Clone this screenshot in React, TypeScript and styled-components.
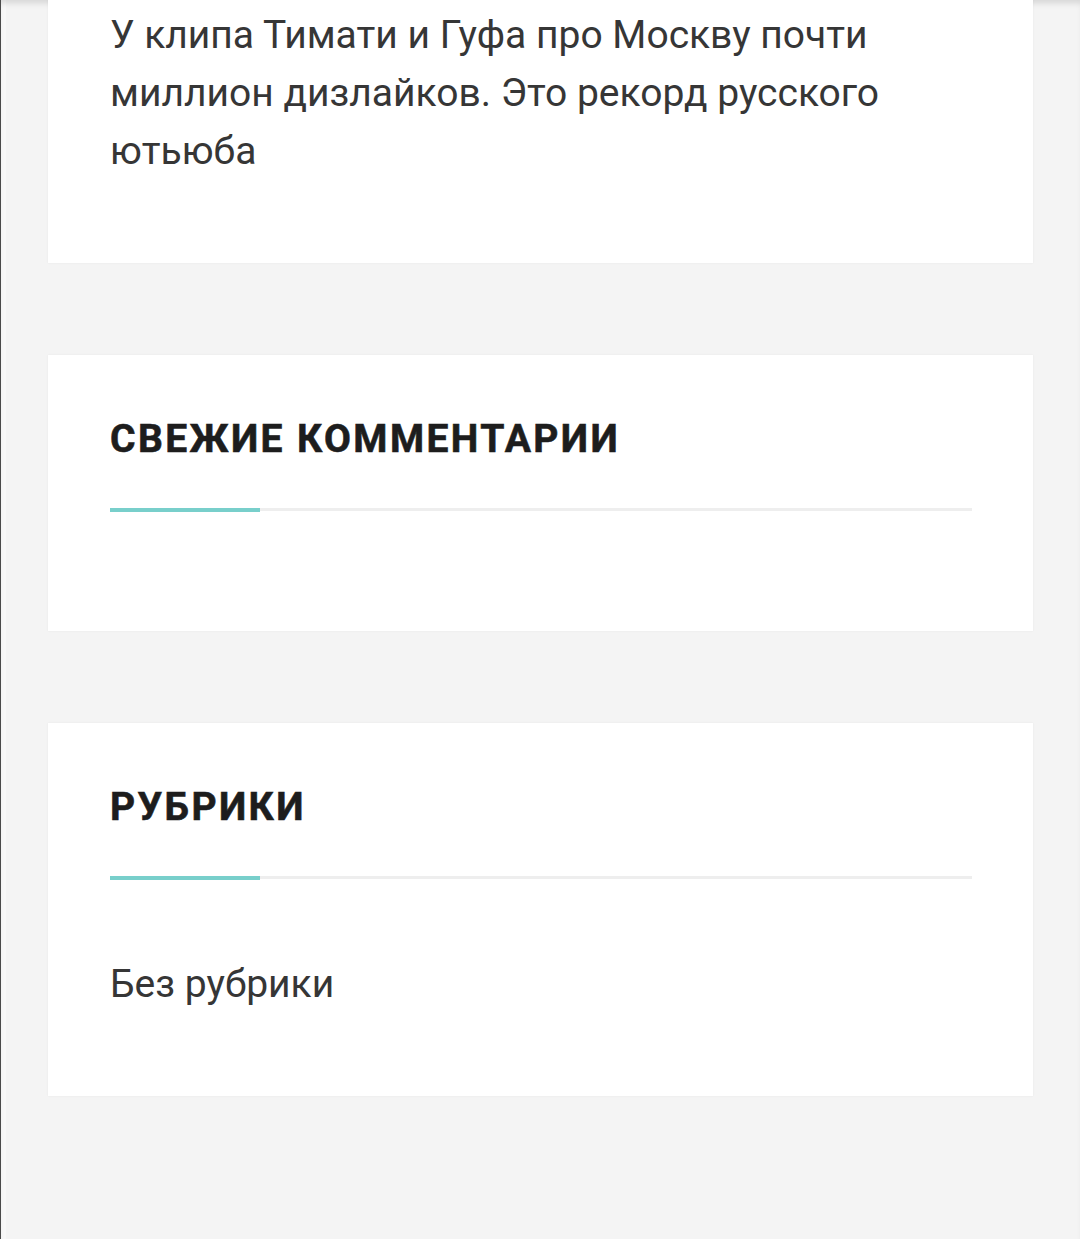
import React from "react";
import styled, { createGlobalStyle } from "styled-components";

const GlobalStyle = createGlobalStyle`
  html, body {
    margin: 0;
    padding: 0;
    background: #f4f4f4;
  }
  body {
    font-family: Roboto, "Liberation Sans", Arial, sans-serif;
    -webkit-font-smoothing: antialiased;
  }
`;

const Page = styled.div`
  min-height: 1239px;
  box-sizing: border-box;
  border-left: 1px solid #4a4a4a;
  background: #f4f4f4;
  box-shadow: inset 0 6px 6px -3px rgba(0, 0, 0, 0.13), inset 5px 0 0 #f8f8f8;
  overflow: hidden;
  padding: 0 47px;
  display: flex;
  flex-direction: column;
  gap: 92px;
`;

const Widget = styled.section<{ $cut?: boolean }>`
  background: #fff;
  padding: 61px 61px 61px 62px;
  box-shadow: 0 0 2px rgba(0, 0, 0, 0.06);
  margin-top: ${(p) => (p.$cut ? "-120px" : "0")};
  padding-top: ${(p) => (p.$cut ? "126px" : "61px")};
`;

const Excerpt = styled.p`
  margin: 0 0 22px;
  font-size: 39px;
  line-height: 58px;
  color: #363636;
`;

const Title = styled.h2`
  margin: 0;
  font-size: 39px;
  line-height: 46px;
  font-weight: 700;
  color: #1d1d1d;
  text-transform: uppercase;
  letter-spacing: 2.4px;
  -webkit-text-stroke: 0.6px #1d1d1d;
`;

const Divider = styled.div`
  margin-top: 46px;
  height: 3px;
  background: #eeeeee;
  display: flex;
  align-items: center;
`;

const Accent = styled.span`
  width: 150px;
  height: 4px;
  background: #78cfcb;
`;

const List = styled.ul`
  list-style: none;
  margin: 76px 0 22px;
  padding: 0;
`;

const Item = styled.li`
  font-size: 39px;
  line-height: 58px;
  color: #363636;
`;

const Spacer = styled.div`
  height: 59px;
`;

function WidgetTitle({ children }: { children: React.ReactNode }) {
  return (
    <>
      <Title>{children}</Title>
      <Divider>
        <Accent />
      </Divider>
    </>
  );
}

export default function App() {
  return (
    <>
      <GlobalStyle />
      <Page>
        <Widget $cut>
          <Excerpt>
            У клипа Тимати и Гуфа про Москву почти миллион дизлайков. Это рекорд русского ютьюба
          </Excerpt>
        </Widget>

        <Widget>
          <WidgetTitle>Свежие комментарии</WidgetTitle>
          <Spacer />
        </Widget>

        <Widget>
          <WidgetTitle>Рубрики</WidgetTitle>
          <List>
            <Item>Без рубрики</Item>
          </List>
        </Widget>
      </Page>
    </>
  );
}
